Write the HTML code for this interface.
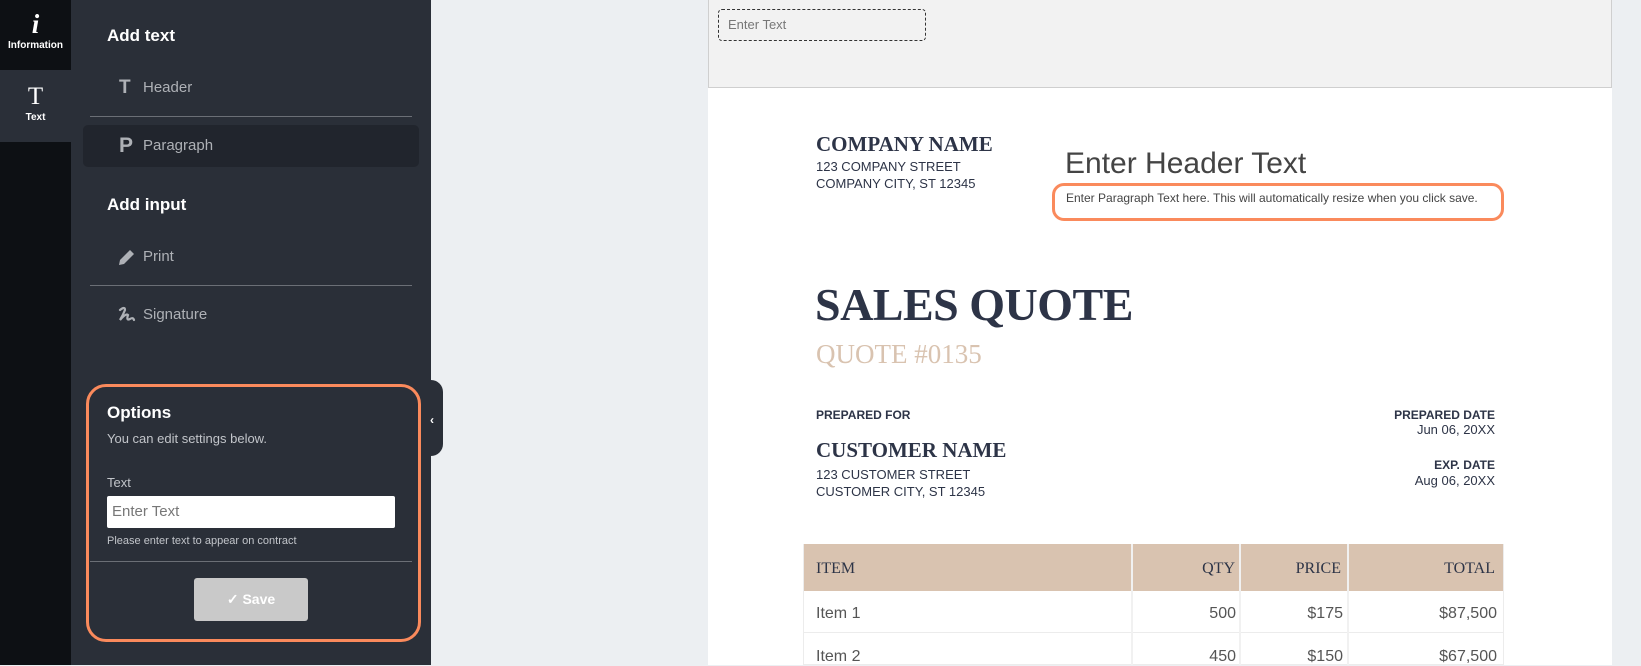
<!DOCTYPE html>
<html><head><meta charset="utf-8"><style>
*{margin:0;padding:0;box-sizing:border-box}
body{width:1641px;height:665px;overflow:hidden;background:#eceff2;font-family:"Liberation Sans",sans-serif;position:relative}
.a{position:absolute;white-space:nowrap}
.serif{font-family:"Liberation Serif",serif}
</style></head><body>
<div class="a" style="left:0;top:0;width:71px;height:665px;background:#0d1014"></div>
<div class="a" style="left:0;top:70px;width:71px;height:72px;background:#2a2f38"></div>
<div class="a serif" style="left:0;top:11px;width:71px;text-align:center;color:#fff;font-size:27px;font-style:italic;font-weight:bold;line-height:27px">i</div>
<div class="a" style="left:0;top:40px;width:71px;text-align:center;color:#fff;font-size:10px;font-weight:bold">Information</div>
<div class="a serif" style="left:0;top:84px;width:71px;text-align:center;color:#fff;font-size:25px;line-height:25px">T</div>
<div class="a" style="left:0;top:112px;width:71px;text-align:center;color:#fff;font-size:10px;font-weight:bold">Text</div>
<div class="a" style="left:71px;top:0;width:360px;height:665px;background:#2a2f38"></div>
<div class="a" style="left:107px;top:26px;color:#fff;font-size:17px;font-weight:bold">Add text</div>
<div class="a" style="left:119px;top:77px;color:#aeb1b6;font-size:19px;font-weight:bold">T</div>
<div class="a" style="left:143px;top:79px;color:#aeb1b6;font-size:15px">Header</div>
<div class="a" style="left:90px;top:116px;width:322px;height:1px;background:#6b6f76"></div>
<div class="a" style="left:83px;top:125px;width:336px;height:42px;background:#21252d;border-radius:5px"></div>
<div class="a" style="left:119px;top:134px;color:#aeb1b6;font-size:21px;font-weight:bold">P</div>
<div class="a" style="left:143px;top:137px;color:#aeb1b6;font-size:15px">Paragraph</div>
<div class="a" style="left:107px;top:195px;color:#fff;font-size:17px;font-weight:bold">Add input</div>
<svg class="a" style="left:117px;top:247px" width="20" height="20" viewBox="0 0 20 20"><path d="M2 18 L3 13 L13 3 L17 7 L7 17 Z" fill="#aeb1b6"/></svg>
<div class="a" style="left:143px;top:248px;color:#aeb1b6;font-size:15px">Print</div>
<div class="a" style="left:90px;top:285px;width:322px;height:1px;background:#6b6f76"></div>
<svg class="a" style="left:117px;top:305px" width="20" height="20" viewBox="0 0 20 20"><path d="M3 5 Q8 1 8 5 Q6 10 3 15 Q9 8 11 10 Q9 16 13 14 Q16 12 17 15" fill="none" stroke="#aeb1b6" stroke-width="2.2" stroke-linecap="round"/></svg>
<div class="a" style="left:143px;top:306px;color:#aeb1b6;font-size:15px">Signature</div>
<div class="a" style="left:86px;top:384px;width:335px;height:258px;border:3px solid #fa8a5c;border-radius:20px"></div>
<div class="a" style="left:107px;top:403px;color:#fff;font-size:17px;font-weight:bold">Options</div>
<div class="a" style="left:107px;top:431px;color:#c2c5ca;font-size:13px">You can edit settings below.</div>
<div class="a" style="left:107px;top:475px;color:#c2c5ca;font-size:13px">Text</div>
<div class="a" style="left:107px;top:496px;width:288px;height:32px;background:#fff;border-radius:2px;color:#777;font-size:15px;padding:7px 5px">Enter Text</div>
<div class="a" style="left:107px;top:535px;color:#c2c5ca;font-size:11px">Please enter text to appear on contract</div>
<div class="a" style="left:90px;top:561px;width:322px;height:1px;background:#6b6f76"></div>
<div class="a" style="left:194px;top:578px;width:114px;height:43px;background:#c9c9c9;border-radius:3px;color:#fff;font-size:14px;font-weight:bold;text-align:center;line-height:43px">✓ Save</div>
<div class="a" style="left:428px;top:380px;width:15px;height:76px;background:#2a2f38;border-radius:0 12px 12px 0"></div>
<div class="a" style="left:430px;top:413px;color:#fff;font-size:12px;font-weight:bold">‹</div>
<div class="a" style="left:708px;top:0;width:904px;height:665px;background:#fff"></div>
<div class="a" style="left:708px;top:0;width:904px;height:88px;background:#f2f2f2;border:1px solid #cfcfcf;border-top:none"></div>
<div class="a" style="left:718px;top:9px;width:208px;height:32px;border:1px dashed #333;border-radius:4px;color:#777;font-size:13px;padding:7px 9px">Enter Text</div>
<div class="a serif" style="left:816px;top:132px;color:#2d3447;font-size:21px;font-weight:bold">COMPANY NAME</div>
<div class="a" style="left:816px;top:158px;color:#2d3447;font-size:13px;line-height:17px">123 COMPANY STREET<br>COMPANY CITY, ST 12345</div>
<div class="a" style="left:1065px;top:147px;color:#444;font-size:30px">Enter Header Text</div>
<div class="a" style="left:1052px;top:183px;width:452px;height:38px;border:3px solid #fa8a5c;border-radius:12px"></div>
<div class="a" style="left:1066px;top:191px;color:#444;font-size:12px">Enter Paragraph Text here. This will automatically resize when you click save.</div>
<div class="a serif" style="left:815px;top:278px;color:#2d3447;font-size:46px;font-weight:bold;letter-spacing:-0.5px">SALES QUOTE</div>
<div class="a serif" style="left:816px;top:339px;color:#d9c3b0;font-size:27px">QUOTE #0135</div>
<div class="a" style="left:816px;top:408px;color:#2d3447;font-size:12px;font-weight:bold">PREPARED FOR</div>
<div class="a serif" style="left:816px;top:438px;color:#2d3447;font-size:21px;font-weight:bold">CUSTOMER NAME</div>
<div class="a" style="left:816px;top:466px;color:#2d3447;font-size:13px;line-height:17px">123 CUSTOMER STREET<br>CUSTOMER CITY, ST 12345</div>
<div class="a" style="right:146px;top:408px;color:#2d3447;font-size:12px;font-weight:bold;text-align:right">PREPARED DATE</div>
<div class="a" style="right:146px;top:422px;color:#2d3447;font-size:13px;text-align:right">Jun 06, 20XX</div>
<div class="a" style="right:146px;top:458px;color:#2d3447;font-size:12px;font-weight:bold;text-align:right">EXP. DATE</div>
<div class="a" style="right:146px;top:473px;color:#2d3447;font-size:13px;text-align:right">Aug 06, 20XX</div>
<div class="a" style="left:803px;top:544px;width:701px;height:47px;background:#d9c3b0"></div>
<div class="a" style="left:803px;top:544px;width:701px;height:121px;border:1px solid #ececec;border-top:none"></div>
<div class="a" style="left:803px;top:632px;width:701px;height:1px;background:#ececec"></div>
<div class="a" style="left:1131px;top:544px;width:2px;height:121px;background:#f1f1f1"></div>
<div class="a" style="left:1239px;top:544px;width:2px;height:121px;background:#f1f1f1"></div>
<div class="a" style="left:1347px;top:544px;width:2px;height:121px;background:#f1f1f1"></div>
<div class="a serif" style="left:816px;top:560px;color:#2d3447;font-size:16px">ITEM</div>
<div class="a serif" style="right:406px;top:560px;color:#2d3447;font-size:16px">QTY</div>
<div class="a serif" style="right:300px;top:560px;color:#2d3447;font-size:16px">PRICE</div>
<div class="a serif" style="right:146px;top:560px;color:#2d3447;font-size:16px">TOTAL</div>
<div class="a" style="left:816px;top:605px;color:#555;font-size:16px">Item 1</div>
<div class="a" style="right:405px;top:605px;color:#555;font-size:16px">500</div>
<div class="a" style="right:298px;top:605px;color:#555;font-size:16px">$175</div>
<div class="a" style="right:144px;top:605px;color:#555;font-size:16px">$87,500</div>
<div class="a" style="left:816px;top:648px;color:#555;font-size:16px">Item 2</div>
<div class="a" style="right:405px;top:648px;color:#555;font-size:16px">450</div>
<div class="a" style="right:298px;top:648px;color:#555;font-size:16px">$150</div>
<div class="a" style="right:144px;top:648px;color:#555;font-size:16px">$67,500</div>
</body></html>
